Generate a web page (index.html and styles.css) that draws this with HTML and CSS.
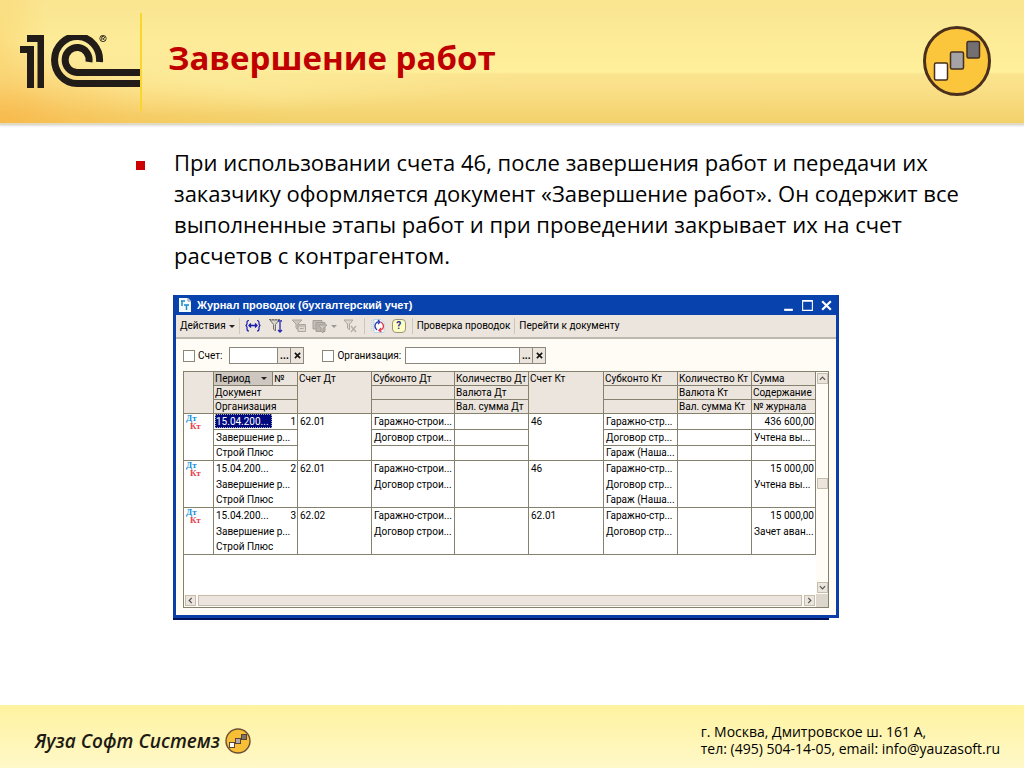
FILE: index.html
```html
<!DOCTYPE html>
<html lang="ru">
<head>
<meta charset="utf-8">
<title>Завершение работ</title>
<link rel="stylesheet" href="styles.css">
</head>
<body>
<header class="header">
  <div class="brand">
    <svg class="logo" viewBox="0 0 120 55" role="img" aria-label="1C">
      <g fill="#211c18">
        <path d="M7 0H24V53H17.500V7H7ZM0 11H14V53H7V18H0Z"/>
      </g>
      <g fill="none" stroke="#211c18" stroke-width="7">
        <path d="M79.500 27A22.500 23.500 0 1 0 57 48.500H120"/>
        <path d="M69 27A12 12.500 0 1 0 57 37.500H120"/>
      </g>
      <circle cx="83" cy="3.500" r="3.200" fill="none" stroke="#211c18" stroke-width=".8"/>
      <path d="M81.800 5.500V1.500H83.500Q84.800 1.700 84.500 2.800T83 3.700L84.700 5.500" fill="none" stroke="#211c18" stroke-width=".9"/>
    </svg>
  </div>
  <h1 class="title">Завершение работ</h1>
  <svg class="emblem" viewBox="0 0 68 70" aria-hidden="true">
    <ellipse cx="34" cy="35" rx="32.500" ry="33.500" fill="#fbc63c" stroke="#4a2f1c" stroke-width="3"/>
    <g stroke="#45301f" stroke-width="1.500">
      <rect x="11.500" y="37" width="13" height="17" rx="1.500" fill="#fff"/>
      <rect x="27.500" y="26" width="13" height="17" rx="1.500" fill="#a5a3a5"/>
      <rect x="44" y="15.500" width="12.500" height="16.500" rx="1.500" fill="#727072"/>
    </g>
  </svg>
</header>

<main class="content">
  <ul class="points">
    <li>При использовании счета 46, после завершения работ и передачи их<br>заказчику оформляется документ «Завершение работ». Он содержит все<br>выполненные этапы работ и при проведении закрывает их на счет<br>расчетов с контрагентом.</li>
  </ul>

  <section class="window">
    <div class="frame">
      <div class="titlebar">
        <svg class="app-icon" viewBox="0 0 12 14" aria-hidden="true"><path d="M0 0H9L12 3V14H0Z" fill="#f4fbff"/><path d="M2 3H6M3 3V8M5 7H10M7.500 7V12" stroke="#188bc6" stroke-width="1.500" fill="none"/><path d="M9 0V3H12" stroke="#88a" fill="none"/></svg>
        <h2 class="caption">Журнал проводок (бухгалтерский учет)</h2>
        <button class="sys" aria-label="Свернуть"><svg viewBox="0 0 12 12"><path d="M2 10H10" stroke="#fff" stroke-width="2"/></svg></button>
        <button class="sys" aria-label="Развернуть"><svg viewBox="0 0 12 12"><path d="M1.500 1.500H10.500V10.500H1.500ZM1 2H11" stroke="#fff" fill="none"/></svg></button>
        <button class="sys" aria-label="Закрыть"><svg viewBox="0 0 12 12"><path d="M2 2L10 10M10 2L2 10" stroke="#fff" stroke-width="2"/></svg></button>
      </div>
      <div class="toolbar">
        <button class="tool">Действия <span class="arrow"></span></button>
        <i class="sep"></i>
        <button class="tool icon" aria-label="Интервал"><svg viewBox="0 0 16 16"><path d="M4 2.500Q2 2.500 2 4.500V6L1 7.500L2 9V11Q2 13 4 13M12 2.500Q14 2.500 14 4.500V6L15 7.500L14 9V11Q14 13 12 13" fill="none" stroke="#1a1ab0" stroke-width="1.200"/><path d="M4 7.500H12M6 5.500L4 7.500L6 9.500M10 5.500L12 7.500L10 9.500" fill="none" stroke="#1a1ab0" stroke-width="1.300"/></svg></button>
        <button class="tool icon" aria-label="Отбор и сортировка"><svg viewBox="0 0 16 16"><path d="M2 2H11L7.500 6.500V13L5.500 11V6.500Z" fill="#d8d5cc" stroke="#77746e"/><path d="M1 1.500H13" stroke="#777" stroke-dasharray="2 1"/><path d="M12 4V14M10 12L12 14L14 12M10 3H14" fill="none" stroke="#2828b0" stroke-width="1.300"/></svg></button>
        <button class="tool icon" aria-label="Отбор по значению"><svg viewBox="0 0 16 16"><path d="M1 2H11L7 6V12L5 10V6Z" fill="#ccc6bf" stroke="#aaa59e"/><path d="M7 6.500H14.500V13.500H7ZM7 8H14M9 10.500H12.500" fill="#ddd7d0" stroke="#aaa59e"/></svg></button>
        <button class="tool icon wide" aria-label="История отборов"><svg viewBox="0 0 16 16"><path d="M1 2.500H10V11H1Z" fill="#c4beb7" stroke="#a39f99"/><path d="M4 4.500H13V13.500H4Z" fill="#b9b3ac" stroke="#a39f99"/><path d="M6 7H15L11 10.500V15L9 13V10Z" fill="#ccc6bf" stroke="#a39f99"/></svg><span class="arrow dim"></span></button>
        <button class="tool icon" aria-label="Отключить отбор"><svg viewBox="0 0 16 16"><path d="M2 2H11L7.500 6V12L5.500 10V6Z" fill="#ddd7d0" stroke="#aaa59e"/><path d="M9 8L14 14M14 8L9 14" stroke="#b4aaa5" stroke-width="1.300"/></svg></button>
        <i class="sep"></i>
        <button class="tool icon" aria-label="Обновить"><svg viewBox="0 0 16 16"><path d="M1.500 2V14M3.500 2V14" stroke="#b8d5ed" stroke-dasharray="1 1"/><path d="M4 1.500H11L14 4.500V14.500H4Z" fill="#fff" stroke="#b8d5ed"/><path d="M7 12Q4 9 5.500 6T9.500 4M8 2L10 4L8 6" fill="none" stroke="#3041b4" stroke-width="1.400"/><path d="M11 4Q14.500 7 13 10T9 12.500M11 10L9 12.500L11.500 14" fill="none" stroke="#e13b48" stroke-width="1.400"/></svg></button>
        <button class="tool icon help" aria-label="Справка">?</button>
        <i class="sep"></i>
        <button class="tool">Проверка проводок</button>
        <i class="sep"></i>
        <button class="tool">Перейти к документу</button>
      </div>
      <div class="pane">
        <div class="filters">
          <input type="checkbox" class="check" id="use-acc"><label for="use-acc">Счет:</label>
          <span class="field acc"><input type="text" aria-label="Счет"><button aria-label="Выбрать счет">...</button><button aria-label="Очистить счет"><svg viewBox="0 0 8 8"><path d="M1 1L7 7M7 1L1 7" stroke="#111" stroke-width="1.800"/></svg></button></span>
          <input type="checkbox" class="check" id="use-org"><label for="use-org">Организация:</label>
          <span class="field org"><input type="text" aria-label="Организация"><button aria-label="Выбрать организацию">...</button><button aria-label="Очистить организацию"><svg viewBox="0 0 8 8"><path d="M1 1L7 7M7 1L1 7" stroke="#111" stroke-width="1.800"/></svg></button></span>
        </div>
        <div class="grid">
          <table class="journal">
            <colgroup><col class="w-icon"><col class="w-date"><col class="w-num"><col class="w-acc"><col class="w-sub"><col class="w-acc"><col class="w-kt"><col class="w-acc"><col class="w-acc"><col class="w-sum"></colgroup>
            <thead>
              <tr><th rowspan="3"></th><th class="sorted">Период <span class="arrow"></span></th><th>№</th><th rowspan="3">Счет Дт</th><th>Субконто Дт</th><th>Количество Дт</th><th rowspan="3">Счет Кт</th><th>Субконто Кт</th><th>Количество Кт</th><th>Сумма</th></tr>
              <tr><th colspan="2">Документ</th><th></th><th>Валюта Дт</th><th></th><th>Валюта Кт</th><th>Содержание</th></tr>
              <tr><th colspan="2">Организация</th><th></th><th>Вал. сумма Дт</th><th></th><th>Вал. сумма Кт</th><th>№ журнала</th></tr>
            </thead>
            <tbody class="lined">
              <tr><td rowspan="3" class="mark"><span class="dt">Дт</span><span class="kt">Кт</span></td><td class="date"><span class="selected">15.04.200...</span></td><td class="num">1</td><td rowspan="3" class="top">62.01</td><td>Гаражно-строи...</td><td></td><td rowspan="3" class="top">46</td><td>Гаражно-стр...</td><td></td><td class="num">436 600,00</td></tr>
              <tr><td colspan="2">Завершение р...</td><td>Договор строи...</td><td></td><td>Договор стр...</td><td></td><td>Учтена вы...</td></tr>
              <tr><td colspan="2">Строй Плюс</td><td></td><td></td><td>Гараж (Наша...</td><td></td><td></td></tr>
            </tbody>
            <tbody>
              <tr><td rowspan="3" class="mark"><span class="dt">Дт</span><span class="kt">Кт</span></td><td class="date">15.04.200...</td><td class="num">2</td><td rowspan="3" class="top">62.01</td><td>Гаражно-строи...</td><td></td><td rowspan="3" class="top">46</td><td>Гаражно-стр...</td><td></td><td class="num">15 000,00</td></tr>
              <tr><td colspan="2">Завершение р...</td><td>Договор строи...</td><td></td><td>Договор стр...</td><td></td><td>Учтена вы...</td></tr>
              <tr><td colspan="2">Строй Плюс</td><td></td><td></td><td>Гараж (Наша...</td><td></td><td></td></tr>
            </tbody>
            <tbody>
              <tr><td rowspan="3" class="mark"><span class="dt">Дт</span><span class="kt">Кт</span></td><td class="date">15.04.200...</td><td class="num">3</td><td rowspan="3" class="top">62.02</td><td>Гаражно-строи...</td><td></td><td rowspan="3" class="top">62.01</td><td>Гаражно-стр...</td><td></td><td class="num">15 000,00</td></tr>
              <tr><td colspan="2">Завершение р...</td><td>Договор строи...</td><td></td><td>Договор стр...</td><td></td><td>Зачет аван...</td></tr>
              <tr><td colspan="2">Строй Плюс</td><td></td><td></td><td></td><td></td><td></td></tr>
            </tbody>
          </table>
          <div class="vscroll">
            <button aria-label="Вверх"><svg viewBox="0 0 8 8"><path d="M1 5.500L4 2.500L7 5.500" fill="none" stroke="#555" stroke-width="1.400"/></svg></button>
            <span class="thumb"></span>
            <button aria-label="Вниз"><svg viewBox="0 0 8 8"><path d="M1 2.500L4 5.500L7 2.500" fill="none" stroke="#555" stroke-width="1.400"/></svg></button>
          </div>
          <div class="hscroll">
            <button aria-label="Влево"><svg viewBox="0 0 8 8"><path d="M5.500 1L2.500 4L5.500 7" fill="none" stroke="#555" stroke-width="1.400"/></svg></button>
            <span class="track"></span>
            <button aria-label="Вправо"><svg viewBox="0 0 8 8"><path d="M2.500 1L5.500 4L2.500 7" fill="none" stroke="#555" stroke-width="1.400"/></svg></button>
          </div>
          <div class="corner"></div>
        </div>
      </div>
    </div>
    <div class="edge"></div>
  </section>
</main>

<footer class="footer">
  <div class="company">Яуза Софт Системз
    <svg class="mini" viewBox="0 0 26 26" aria-hidden="true"><circle cx="13" cy="13" r="12" fill="#f6bf35" stroke="#6b5037" stroke-width="1.400"/><g stroke="#5b4630"><rect x="4.500" y="14.500" width="5" height="5" fill="#fff"/><rect x="10.500" y="10.500" width="5" height="5" fill="#b5aaa5"/><rect x="16.500" y="6.500" width="5" height="5" fill="#7d7272"/></g></svg>
  </div>
  <address class="contacts">г. Москва, Дмитровское ш. 161 А,<br>тел: (495) 504-14-05, email: info@yauzasoft.ru</address>
</footer>
</body>
</html>
```
FILE: styles.css
```css
* { box-sizing: border-box; }
body {
  margin: 0;
  min-height: 100vh;
  display: flex;
  flex-direction: column;
  background: #fff;
  color: #000;
  font-family: "Open Sans", "Noto Sans", sans-serif;
}
button, input { font: inherit; color: inherit; margin: 0; padding: 0; border: 0; border-radius: 0; background: none; }
svg { display: block; }

.header {
  display: flex;
  align-items: flex-start;
  height: 125px;
  padding: 13px 33px 0 20px;
  border-bottom: 2px solid #e2dbc4;
  box-shadow: 0 1px 2px #ddd;
  background:
    radial-gradient(ellipse 150px 80px at 0 100%, rgba(248, 180, 70, .75), rgba(248, 190, 85, .35) 50%, transparent),
    radial-gradient(ellipse 240px 60px at 60px 125px, rgba(249, 190, 80, .5), transparent),
    radial-gradient(ellipse 50px 120px at 0 50px, rgba(249, 206, 100, .5), transparent),
    radial-gradient(ellipse 420px 44px at 100px 72px, #fcea98 30%, transparent),
    linear-gradient(#fae591, #fff09c 72px, #fbe48f 74px, #f9de85 92px, #f2d16a 123px);
}
.brand { padding: 22px 0 20px; height: 98px; border-right: 2px solid #fad52c; }
.logo { width: 120px; height: 55px; }
.title { flex: 1; margin: 20px 0 0 26px; color: #c00000; font: bold 33px/50px "Open Sans", sans-serif; }
.emblem { width: 68px; height: 70px; margin-top: 13px; }

.content { flex: 1; padding: 22px 40px 20px 173px; }
.points { margin: 0 0 24px; padding: 0; list-style: none; font: 22px/31px "Open Sans", sans-serif; white-space: nowrap; }
.points li { position: relative; padding-left: 1px; }
.points li::before { content: ""; position: absolute; left: -37px; top: 14px; width: 9px; height: 9px; background: #c00; }

.window { max-width: 666px; font: 10px/14px "Roboto", sans-serif; }
.frame { border: 3px solid #0c3ea8; border-top: 0; background: #fffcf5; }
.edge { height: 2px; margin-right: 10px; background: #00145c; }
.titlebar { display: flex; align-items: center; gap: 6px; height: 20px; padding: 0 3px 0 3px; background: #0842ad; color: #fff; }
.app-icon { width: 12px; height: 14px; }
.caption { flex: 1; margin: 0; font: bold 11px/20px "Liberation Sans", sans-serif; }
.sys { width: 13px; height: 13px; }
.toolbar { display: flex; align-items: center; gap: 4px; height: 24px; padding: 0 4px; background: #ece5dd; border-bottom: 2px solid #bdb8ae; white-space: nowrap; }
.tool { display: flex; align-items: center; gap: 3px; }
.icon { width: 19px; height: 16px; justify-content: center; }
.icon svg { width: 16px; height: 16px; flex: none; }
.wide { width: 24px; }
.help { width: 14px; height: 14px; margin: 0 2px 0 0; border: 1px solid #98957a; border-radius: 4px; background: #ffffc4; color: #1a2a90; font-weight: bold; }
.sep { width: 1px; height: 16px; background: #cdc6bb; }
.arrow { display: inline-block; border: 3px solid transparent; border-top-color: #222; border-bottom: 0; }
.dim { border-top-color: #999; }

.pane { padding: 8px 7px 7px; }
.filters { display: flex; align-items: center; height: 17px; margin-bottom: 7px; }
.check { appearance: none; width: 12px; height: 12px; border: 1px solid #8b877c; background: #fff; }
.filters label { margin-left: 3px; }
.field { display: flex; height: 17px; border: 1px solid #8b877c; background: #fff; }
.field input { flex: 1; min-width: 0; }
.field button { display: flex; align-items: center; justify-content: center; width: 13px; border-left: 1px solid #8b877c; background: #ece5dd; font-weight: bold; }
.field svg { width: 7px; height: 7px; }
.acc { width: 75px; margin: 0 18px 0 7px; }
.org { width: 141px; margin-left: 4px; }

.grid { display: grid; grid-template-columns: minmax(0, 1fr) 12px; grid-template-rows: 222px 13px; border: 1px solid #85816f; background: #fff; }
.journal { width: 100%; align-self: start; table-layout: fixed; border-collapse: separate; border-spacing: 0; }
.w-icon { width: 30px; }
.w-date { width: 59px; }
.w-num { width: 25px; }
.w-acc { width: 74px; }
.w-kt { width: 75px; }
.w-sub { width: 83px; }
.w-sum { width: 64px; }
.journal th, .journal td { height: 14px; padding: 0 1px; overflow: hidden; border-right: 1px solid #85816f; text-align: left; font-weight: normal; line-height: 13px; white-space: nowrap; vertical-align: top; }
.journal th { padding: 0 0 0 1px; border-bottom: 1px solid #85816f; background: #ece5dd; }
.journal .sorted { background: #cdc7bf; }
.sorted .arrow { margin: 0 0 2px 8px; }
.journal td { height: 16px; padding: 0 0 0 2px; line-height: 15px; }
.journal tr:last-child td { height: 15px; border-bottom: 1px solid #85816f; line-height: 14px; }
.journal td[rowspan] { border-bottom: 1px solid #85816f; }
.journal .lined td { border-bottom: 1px solid #85816f; }
.journal .date { border-right: 0; padding: 0; text-indent: 2px; }
.lined .date { text-indent: 1px; }
.journal .num { padding-right: 1px; text-align: right; }
.journal .top { padding-left: 2px; }
.selected { display: block; width: 57px; margin-left: 1px; height: 14px; background: #000a80; color: #fff; outline: 1px dotted #aaa; outline-offset: -1px; }
.journal .mark { padding-left: 2px; font: bold 9px/8px "Liberation Serif", serif; }
.mark span { display: block; }
.dt { color: #1690d8; }
.kt { padding-left: 4px; color: #e4424b; }

.vscroll { display: flex; flex-direction: column; justify-content: space-between; align-items: center; padding: 1px 0; background: #fffcf5; }
.vscroll button, .hscroll button { display: flex; align-items: center; justify-content: center; width: 11px; height: 11px; border: 1px solid #c5bdb0; background: #ece5dd; }
.vscroll svg, .hscroll svg { width: 7px; height: 7px; flex: none; }
.thumb { width: 11px; height: 11px; border: 1px solid #c5bdb0; background: #ece5dd; }
.hscroll { display: flex; align-items: center; gap: 2px; padding: 0 1px; background: #fffcf5; }
.track { flex: 1; height: 11px; border: 1px solid #c5bdb0; background: #ece5dd; }
.corner { background: #ddd6cd; }

.footer { display: flex; justify-content: space-between; height: 63px; padding: 18px 24px 0 35px; background: linear-gradient(#fff3a0, #fff8c8); }
.company { display: flex; gap: 5px; height: 36px; align-items: center; font: italic 600 19px/30px "Open Sans", sans-serif; color: #1d1a14; }
.mini { width: 26px; height: 26px; }
.contacts { font: 14px/17px "Open Sans", sans-serif; white-space: nowrap; }
```
